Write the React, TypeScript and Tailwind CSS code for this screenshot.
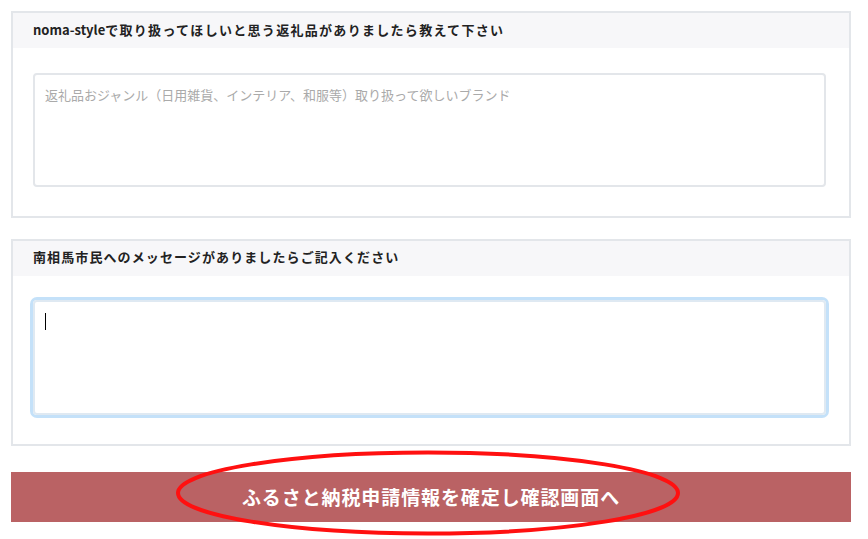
export default function App() {
  const font = { fontFamily: '"Noto Sans CJK JP", "Noto Sans", sans-serif' };

  return (
    <div className="min-h-screen bg-white pt-[11px]" style={font}>
      <div className="ml-[11px] w-[840px] flex flex-col">
        <section className="border-2 border-[#e3e6ea] bg-white">
          <div className="h-[35px] bg-[#f7f7f9] px-5 pb-[2px] flex items-center">
            <h2 className="text-[13px] font-bold text-[#222]">
              noma-style
              <span className="tracking-[1.3px]">で取り扱ってほしいと思う返礼品がありましたら教えて下さい</span>
            </h2>
          </div>
          <div className="pl-5 pr-[23px] pt-[25px] pb-[29px]">
            <textarea
              className="block w-full h-[114px] resize-none rounded-[4px] border-2 border-[#e3e6ea] px-[10px] py-[10px] text-[13px] text-[#333] placeholder:text-[#aaa] outline-none"
              placeholder="返礼品おジャンル（日用雑貨、インテリア、和服等）取り扱って欲しいブランド"
            />
          </div>
        </section>

        <section className="mt-[21px] border-2 border-[#e3e6ea] bg-white">
          <div className="h-[35px] bg-[#f7f7f9] px-5 pb-[3px] flex items-center">
            <h2 className="text-[13px] font-bold text-[#222] tracking-[1.1px]">
              南相馬市民へのメッセージがありましたらご記入ください
            </h2>
          </div>
          <div className="pl-5 pr-[23px] pt-[24px] pb-[29px]">
            <div className="relative">
              <textarea className="block w-full h-[115px] resize-none rounded-[4px] border-2 border-[#dfe9f2] shadow-[0_0_0_3px_#c4e1f9] px-[10px] py-[10px] text-[13px] outline-none" />
              <span className="absolute left-[12px] top-[13px] w-px h-[17px] bg-black" />
            </div>
          </div>
        </section>

        <div className="relative mt-[26px]">
          <button className="w-full h-[50px] bg-[#ba6264] text-white text-[19px] font-bold tracking-[0.9px] flex items-center justify-center">
            ふるさと納税申請情報を確定し確認画面へ
          </button>
          <svg
            className="absolute pointer-events-none left-[163px] top-[-23px]"
            width="508"
            height="88"
            viewBox="0 0 508 88"
          >
            <ellipse cx="254" cy="44" rx="250" ry="40.5" fill="none" stroke="#ff1010" strokeWidth="4" />
          </svg>
        </div>
      </div>
    </div>
  );
}
